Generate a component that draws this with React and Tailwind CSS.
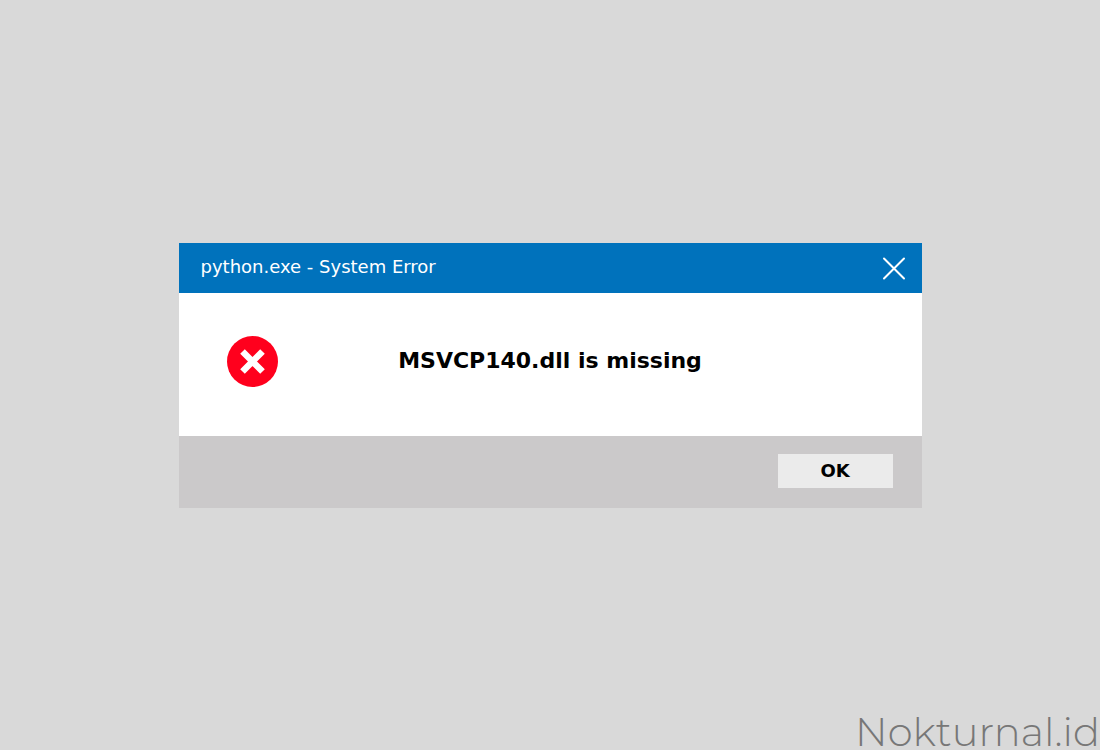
function CloseIcon() {
  return (
    <svg viewBox="0 0 24 24" className="w-6 h-6" fill="none" stroke="white" strokeWidth="2" strokeLinecap="round" aria-hidden="true">
      <path d="M2 2.5 L22 22.5 M22 2.5 L2 22.5" />
    </svg>
  );
}

function ErrorIcon() {
  return (
    <svg viewBox="0 0 51 51" className="w-[51px] h-[51px] shrink-0" aria-hidden="true">
      <circle cx="25.5" cy="25.5" r="25.5" fill="#ff001d" />
      <path d="M15.5 15.5 L35.5 35.5 M35.5 15.5 L15.5 35.5" stroke="white" strokeWidth="6.5" fill="none" />
    </svg>
  );
}

function ErrorDialog({ title, message }) {
  return (
    <section role="alertdialog" aria-labelledby="dialog-title" aria-describedby="dialog-message" className="w-full max-w-[743px]">
      <header className="bg-[#0072bc] h-[50px] flex items-center justify-between pl-[22px] pr-4">
        <h1 id="dialog-title" className="text-white text-[18px] leading-6 pb-0.5">{title}</h1>
        <button type="button" aria-label="Close" className="cursor-pointer">
          <CloseIcon />
        </button>
      </header>
      <div className="bg-white h-[143px] flex items-center px-12 pb-1.5">
        <ErrorIcon />
        <p id="dialog-message" className="flex-1 pr-[51px] text-center text-black text-[22px] leading-7 font-bold">{message}</p>
      </div>
      <footer className="bg-[#cbc9ca] h-[72px] flex items-center justify-end pr-[29px] pb-0.5">
        <button type="button" className="bg-[#ebebeb] text-black text-[18px] leading-6 font-bold w-[115px] h-[34px] cursor-pointer">
          OK
        </button>
      </footer>
    </section>
  );
}

export default function App() {
  return (
    <main className="relative min-h-screen bg-[#d9d9d9] flex items-center justify-center font-['Verdana','DejaVu_Sans',sans-serif]">
      <ErrorDialog title="python.exe - System Error" message="MSVCP140.dll is missing" />
      <span className="absolute right-0 bottom-0 text-[40px] leading-9 font-light text-[#777777] font-['Montserrat','Inter',sans-serif]">
        Nokturnal.id
      </span>
    </main>
  );
}
